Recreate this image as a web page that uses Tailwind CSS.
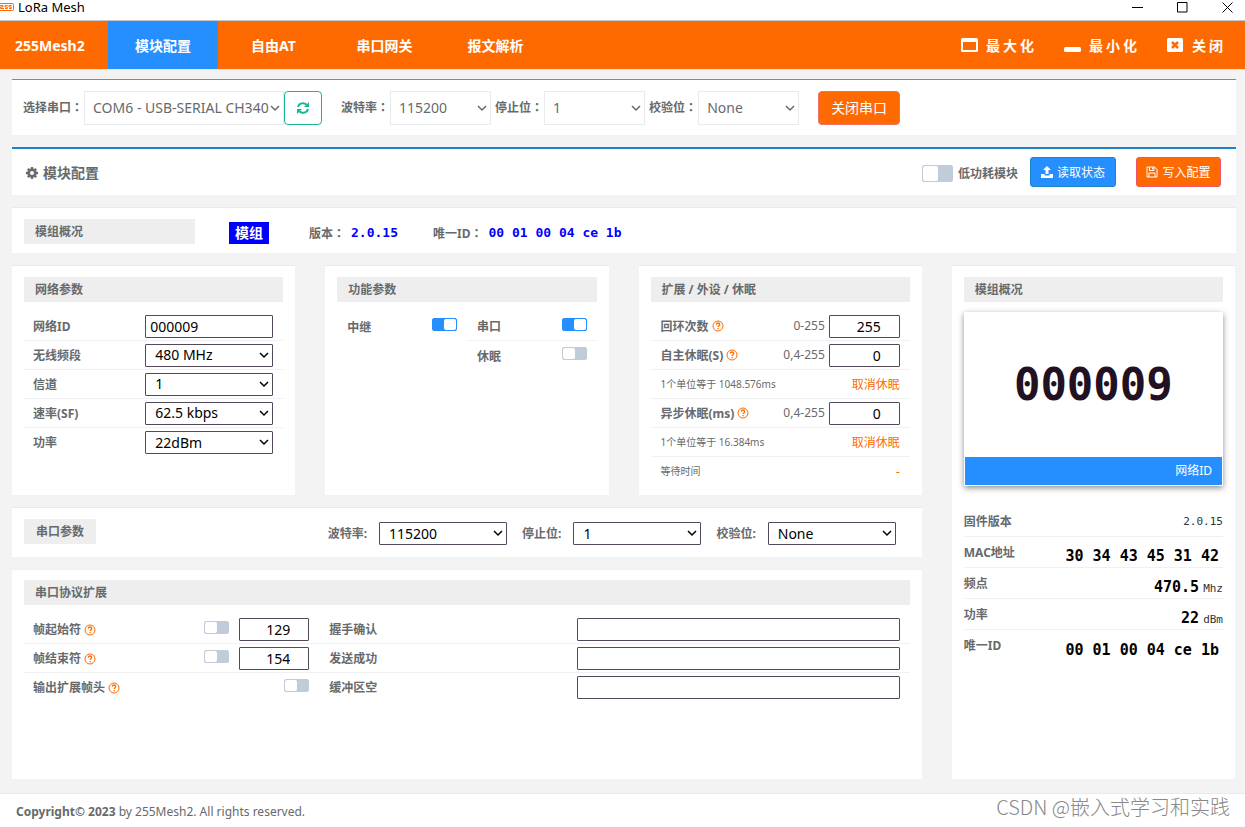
<!DOCTYPE html>
<html lang="zh-CN">
<head>
<meta charset="utf-8">
<meta name="viewport" content="width=device-width, initial-scale=1">
<title>LoRa Mesh</title>
<script src="https://cdn.jsdelivr.net/npm/@tailwindcss/browser@4"></script>
</head>
<body class="min-h-screen flex flex-col bg-[#f3f3f3] text-[#676a6c] text-xs font-['Noto_Sans','Noto_Sans_CJK_SC',sans-serif]">

<svg class="hidden" aria-hidden="true">
  <symbol id="chevron" viewBox="0 0 10 10"><path d="M1 3l4 4 4-4" fill="none" stroke="currentColor" stroke-width="1.5"/></symbol>
  <symbol id="help" viewBox="0 0 12 12"><circle cx="6" cy="6" r="5" fill="none" stroke="currentColor" stroke-width="1"/><path d="M4.3 4.6C4.4 3.5 5.1 3 6 3s1.7.6 1.7 1.5C7.7 5.600 6.100 5.700 6.100 7.100M6.100 8v1.200" fill="none" stroke="currentColor" stroke-width="1.300"/></symbol>
</svg>

<!-- window title bar -->
<header class="flex h-[21px] items-center justify-between border-b border-[#c3c8d0] bg-white pb-1.5 text-black">
  <div class="flex items-center gap-1">
    <svg class="h-2 w-[14px]" viewBox="0 0 14 8" fill="none" stroke="#ff6a00"><path d="M0 .5h12.500a1 1 0 0 1 1 1v5a1 1 0 0 1-1 1H0M0 2.500h3v1.500H.5v1.500H4M7.500 2.500H5V4h2.300v1.500H5M11.500 2.500H9V4h2.300v1.500H9"/></svg>
    <h1 class="text-[13px] leading-4">LoRa Mesh</h1>
  </div>
  <div class="flex items-center gap-[34px] pr-3">
    <button aria-label="Minimize"><svg class="size-[11px]" viewBox="0 0 11 11"><path d="M0 5.500h11" stroke="#000"/></svg></button>
    <button aria-label="Maximize"><svg class="size-[11px]" viewBox="0 0 11 11"><path d="M.5.500h9.500v9.500H.500z" fill="none" stroke="#000"/></svg></button>
    <button aria-label="Close"><svg class="size-[11px]" viewBox="0 0 11 11"><path d="M.5.500l10 10M10.500.500l-10 10" stroke="#000"/></svg></button>
  </div>
</header>

<!-- main navigation -->
<nav class="flex h-[49px] items-stretch justify-between border-b border-[#f7e3d3] bg-[#ff6a00] text-sm font-bold text-white">
  <div class="flex items-stretch">
    <a href="#" class="flex w-[108px] items-center pt-0.5 pl-[15px]">255Mesh2</a>
    <a href="#config" class="flex w-[110px] items-center justify-center bg-[#268fff] pt-0.5">模块配置</a>
    <a href="#at" class="flex w-[111px] items-center justify-center pt-0.5">自由AT</a>
    <a href="#gateway" class="flex w-[111px] items-center justify-center pt-0.5">串口网关</a>
    <a href="#parse" class="flex w-[111px] items-center justify-center pt-0.5">报文解析</a>
  </div>
  <div class="flex items-center gap-[27px] pt-0.5 pr-[19px] tracking-[3px]">
    <button class="flex items-center gap-2"><svg class="h-4 w-[17px]" viewBox="0 0 17 16"><path fill="#fff" fill-rule="evenodd" d="M1.500 0h14A1.500 1.500 0 0 1 17 1.500v11a1.500 1.500 0 0 1-1.500 1.500h-14A1.500 1.500 0 0 1 0 12.500v-11A1.500 1.500 0 0 1 1.500 0zM2 4v8h13V4z"/></svg>最大化</button>
    <button class="flex items-center gap-2"><svg class="h-4 w-[17px]" viewBox="0 0 17 16"><rect y="9" width="17" height="5" rx="1.500" fill="#fff"/></svg>最小化</button>
    <button class="flex items-center gap-2"><svg class="h-4 w-[17px]" viewBox="0 0 17 16"><rect width="16" height="14" rx="1.500" fill="#fff"/><path d="M5 4l6 6M11 4l-6 6" stroke="#ff6a00" stroke-width="2.500"/></svg>关闭</button>
  </div>
</nav>

<main class="flex flex-col gap-3 pt-[9px] pr-[9px] pb-[14px] pl-3">

  <!-- serial connection -->
  <form class="flex h-14 items-center border-t border-[#4a9bcf] bg-white px-[11px]">
    <label for="port" class="mr-px font-bold">选择串口<span lang="zh-TW" class="font-['Noto_Sans_CJK_TC']">：</span></label>
    <div class="relative text-sm">
      <select id="port" class="h-[34px] w-[200px] appearance-none border border-[#e9eaeb] bg-white pl-2"><option>COM6 - USB-SERIAL CH340</option></select>
      <svg class="pointer-events-none absolute top-3 right-1 size-[10px]"><use href="#chevron"/></svg>
    </div>
    <button type="button" aria-label="刷新" class="mr-[19px] flex h-[34px] w-[38px] items-center justify-center rounded-sm border border-[#1ab394] bg-white text-[#1ab394]">
      <svg class="size-[14px]" viewBox="0 0 14 14"><path d="M2 6a5 5 0 0 1 8.500-2.200M12 8a5 5 0 0 1-8.500 2.200" fill="none" stroke="currentColor" stroke-width="2"/><path d="M13 1v5H8zM1 13V8h5z" fill="currentColor"/></svg>
    </button>
    <label for="baud" class="mr-px font-bold">波特率<span lang="zh-TW" class="font-['Noto_Sans_CJK_TC']">：</span></label>
    <div class="relative mr-[4px] text-sm">
      <select id="baud" class="h-[34px] w-[101px] appearance-none border border-[#e9eaeb] bg-white pl-2"><option>115200</option></select>
      <svg class="pointer-events-none absolute top-3 right-1 size-[10px]"><use href="#chevron"/></svg>
    </div>
    <label for="stop" class="mr-px font-bold">停止位<span lang="zh-TW" class="font-['Noto_Sans_CJK_TC']">：</span></label>
    <div class="relative mr-[4px] text-sm">
      <select id="stop" class="h-[34px] w-[101px] appearance-none border border-[#e9eaeb] bg-white pl-2"><option>1</option></select>
      <svg class="pointer-events-none absolute top-3 right-1 size-[10px]"><use href="#chevron"/></svg>
    </div>
    <label for="parity" class="mr-px font-bold">校验位<span lang="zh-TW" class="font-['Noto_Sans_CJK_TC']">：</span></label>
    <div class="relative mr-[19px] text-sm">
      <select id="parity" class="h-[34px] w-[101px] appearance-none border border-[#e9eaeb] bg-white pl-2"><option>None</option></select>
      <svg class="pointer-events-none absolute top-3 right-1 size-[10px]"><use href="#chevron"/></svg>
    </div>
    <button type="button" class="h-[34px] w-[82px] rounded-sm border border-[#f2706a] bg-[#ff6a00] text-sm text-white">关闭串口</button>
  </form>

  <!-- page heading and actions -->
  <section class="flex h-12 items-center justify-between border-t-2 border-[#1c84c6] bg-white pr-[15px] pl-[14px]">
    <h2 class="flex items-center gap-[5px] pt-0.5 text-sm font-bold">
      <svg class="size-3" viewBox="0 0 12 12"><circle cx="6" cy="6" r="3.300" fill="none" stroke="currentColor" stroke-width="2.600"/><path d="M6 0v2M6 10v2M0 6h2M10 6h2M1.800 1.800l1.400 1.400M8.800 8.800l1.400 1.400M1.800 10.200l1.400-1.400M8.800 3.200l1.400-1.400" stroke="currentColor" stroke-width="2.400"/></svg>
      模块配置
    </h2>
    <div class="flex items-center">
      <input id="lowpower" type="checkbox" role="switch" class="mt-0.5 h-[17px] w-[31px] appearance-none rounded-xs border border-[#c0ccda] bg-[#c0ccda] before:block before:size-[15px] before:rounded-xs before:bg-white checked:border-[#268fff] checked:bg-[#268fff] checked:before:ml-auto">
      <label for="lowpower" class="mr-3 ml-[5px] pt-1 font-bold">低功耗模块</label>
      <button class="mr-5 flex h-[30px] w-[86px] items-center justify-center gap-1 rounded-[3px] border border-[#1c84c6] bg-[#268fff] text-white">
        <svg class="size-3" viewBox="0 0 12 12" fill="currentColor"><path d="M6 0l4 4H7.500v4h-3V4H2zM0 8h3.500v1.500h5V8H12v4H0z"/></svg><span class="pt-0.5">读取状态</span>
      </button>
      <button class="flex h-[30px] w-[85px] items-center justify-center gap-1 rounded-[3px] border border-[#ed5565] bg-[#ff6a00] text-white">
        <svg class="size-3" viewBox="0 0 12 12" fill="none" stroke="currentColor"><path d="M1 1h7.500L11 3.500V11H1zM3.500 1v3.500h4.500V1M3 11V7h6v4M6.500 1.500v2"/></svg><span class="pt-0.5">写入配置</span>
      </button>
    </div>
  </section>

  <!-- module summary -->
  <section class="flex h-[46px] items-center border-t border-[#e7eaec] bg-white pt-px pl-3 font-bold">
    <h3 class="mr-[34px] w-[171px] bg-[#eee] px-[11px] pt-px leading-6">模组概况</h3>
    <div class="flex items-center pt-1">
      <span class="mr-10 bg-[#0000ff] px-1.5 text-sm leading-[22px] text-white">模组</span>
      <span>版本<span lang="zh-TW" class="font-['Noto_Sans_CJK_TC']">：</span></span>
      <span class="mr-[35px] ml-1.5 font-['DejaVu_Sans_Mono',monospace] text-[13px] text-[#0000ff]">2.0.15</span>
      <span>唯一ID<span lang="zh-TW" class="font-['Noto_Sans_CJK_TC']">：</span></span>
      <span class="ml-1.5 font-['DejaVu_Sans_Mono',monospace] text-[13px] text-[#0000ff]">00 01 00 04 ce 1b</span>
    </div>
  </section>

  <div class="grid grid-cols-4 gap-x-[30px] gap-y-3 pr-px">

    <!-- network parameters -->
    <section class="min-h-[230px] border-t border-[#e7eaec] bg-white px-3 pt-[11px]">
      <h3 class="mb-[10px] bg-[#eee] px-[11px] pt-px font-bold leading-6">网络参数</h3>
      <div class="flex h-[29px] items-center justify-between border-b border-[#eef0f1] pr-[10px] pl-[9px]">
        <label for="netid" class="pt-0.5 font-bold">网络ID</label>
        <input id="netid" value="000009" class="h-[23px] w-32 rounded-[1px] border border-[#54495a] bg-white px-1 text-sm text-black">
      </div>
      <div class="flex h-[29px] items-center justify-between border-b border-[#eef0f1] pr-[10px] pl-[9px]">
        <label for="band" class="pt-0.5 font-bold">无线频段</label>
        <div class="relative text-sm text-black">
          <select id="band" class="block h-[23px] w-32 appearance-none rounded-[1px] border border-[#54495a] bg-white pl-[9px] leading-5"><option>480 MHz</option></select>
          <svg class="pointer-events-none absolute top-1.5 right-1 size-[10px]"><use href="#chevron"/></svg>
        </div>
      </div>
      <div class="flex h-[29px] items-center justify-between border-b border-[#eef0f1] pr-[10px] pl-[9px]">
        <label for="channel" class="pt-0.5 font-bold">信道</label>
        <div class="relative text-sm text-black">
          <select id="channel" class="block h-[23px] w-32 appearance-none rounded-[1px] border border-[#54495a] bg-white pl-[9px] leading-5"><option>1</option></select>
          <svg class="pointer-events-none absolute top-1.5 right-1 size-[10px]"><use href="#chevron"/></svg>
        </div>
      </div>
      <div class="flex h-[29px] items-center justify-between border-b border-[#eef0f1] pr-[10px] pl-[9px]">
        <label for="rate" class="pt-0.5 font-bold">速率(SF)</label>
        <div class="relative text-sm text-black">
          <select id="rate" class="block h-[23px] w-32 appearance-none rounded-[1px] border border-[#54495a] bg-white pl-[9px] leading-5"><option>62.5 kbps</option></select>
          <svg class="pointer-events-none absolute top-1.5 right-1 size-[10px]"><use href="#chevron"/></svg>
        </div>
      </div>
      <div class="flex h-[29px] items-center justify-between pr-[10px] pl-[9px]">
        <label for="power" class="font-bold">功率</label>
        <div class="relative text-sm text-black">
          <select id="power" class="block h-[23px] w-32 appearance-none rounded-[1px] border border-[#54495a] bg-white pl-[9px] leading-5"><option>22dBm</option></select>
          <svg class="pointer-events-none absolute top-1.5 right-1 size-[10px]"><use href="#chevron"/></svg>
        </div>
      </div>
    </section>

    <!-- feature parameters -->
    <section class="border-t border-[#e7eaec] bg-white px-3 pt-[11px]">
      <h3 class="mb-[10px] bg-[#eee] px-[11px] pt-px font-bold leading-6">功能参数</h3>
      <div class="grid grid-cols-2">
        <div class="flex h-[29px] items-center justify-between px-[10px]">
          <label for="relay" class="pt-0.5 font-bold">中继</label>
          <input id="relay" type="checkbox" role="switch" checked class="mb-1 h-[13px] w-[25px] appearance-none rounded-xs border border-[#c0ccda] bg-[#c0ccda] before:block before:h-[11px] before:w-3 before:rounded-xs before:bg-white checked:border-[#268fff] checked:bg-[#268fff] checked:before:ml-auto">
        </div>
        <div class="flex h-[29px] items-center justify-between border-b border-[#f3f4f5] px-[10px]">
          <label for="serial" class="pt-0.5 font-bold">串口</label>
          <input id="serial" type="checkbox" role="switch" checked class="mb-1 h-[13px] w-[25px] appearance-none rounded-xs border border-[#c0ccda] bg-[#c0ccda] before:block before:h-[11px] before:w-3 before:rounded-xs before:bg-white checked:border-[#268fff] checked:bg-[#268fff] checked:before:ml-auto">
        </div>
        <div class="col-start-2 flex h-[29px] items-center justify-between px-[10px]">
          <label for="sleep" class="pt-0.5 font-bold">休眠</label>
          <input id="sleep" type="checkbox" role="switch" class="mb-1 h-[13px] w-[25px] appearance-none rounded-xs border border-[#c0ccda] bg-[#c0ccda] before:block before:h-[11px] before:w-3 before:rounded-xs before:bg-white checked:border-[#268fff] checked:bg-[#268fff] checked:before:ml-auto">
        </div>
      </div>
    </section>

    <!-- extension and sleep -->
    <section class="border-t border-[#e7eaec] bg-white px-3 pt-[11px]">
      <h3 class="mb-[10px] bg-[#eee] px-[11px] pt-px font-bold leading-6">扩展 / 外设 / 休眠</h3>
      <div class="flex h-[29px] items-center border-b border-[#eef0f1] px-[10px]">
        <label for="loop" class="pt-0.5 font-bold">回环次数</label>
        <svg class="mr-auto ml-[3px] size-3 text-[#ff6a00]"><use href="#help"/></svg>
        <span>0-255</span>
        <input id="loop" value="255" class="ml-1 h-[23px] w-[71px] rounded-[1px] border border-[#54495a] bg-white pr-[18px] text-right text-sm text-black">
      </div>
      <div class="flex h-[29px] items-center border-b border-[#eef0f1] px-[10px]">
        <label for="selfsleep" class="pt-0.5 font-bold">自主休眠(S)</label>
        <svg class="mr-auto ml-[3px] size-3 text-[#ff6a00]"><use href="#help"/></svg>
        <span>0,4-255</span>
        <input id="selfsleep" value="0" class="ml-1 h-[23px] w-[71px] rounded-[1px] border border-[#54495a] bg-white pr-[18px] text-right text-sm text-black">
      </div>
      <div class="flex h-[29px] items-center justify-between border-b border-[#eef0f1] px-[10px] pt-0.5">
        <span class="text-[10px]">1个单位等于 1048.576ms</span>
        <a href="#" class="text-[#ff6a00]">取消休眠</a>
      </div>
      <div class="flex h-[29px] items-center border-b border-[#eef0f1] px-[10px]">
        <label for="asyncsleep" class="pt-0.5 font-bold">异步休眠(ms)</label>
        <svg class="mr-auto ml-[3px] size-3 text-[#ff6a00]"><use href="#help"/></svg>
        <span>0,4-255</span>
        <input id="asyncsleep" value="0" class="ml-1 h-[23px] w-[71px] rounded-[1px] border border-[#54495a] bg-white pr-[18px] text-right text-sm text-black">
      </div>
      <div class="flex h-[29px] items-center justify-between border-b border-[#eef0f1] px-[10px] pt-0.5">
        <span class="text-[10px]">1个单位等于 16.384ms</span>
        <a href="#" class="text-[#ff6a00]">取消休眠</a>
      </div>
      <div class="flex h-[29px] items-center justify-between px-[10px]">
        <span class="text-[10px]">等待时间</span>
        <span class="text-[#ff6a00]">-</span>
      </div>
    </section>

    <!-- module overview -->
    <aside class="row-span-3 border-t border-[#e7eaec] bg-white px-3 pt-[11px]">
      <h3 class="mb-[10px] bg-[#eee] px-[11px] pt-px font-bold leading-6">模组概况</h3>
      <div class="mb-5 border border-white bg-white shadow-[0_2px_6px_rgba(0,0,0,0.45)]">
        <p class="text-center font-['DejaVu_Sans_Mono',monospace] text-[44px] leading-[144px] font-bold text-[#221122]">000009</p>
        <p class="bg-[#268fff] pr-[10px] text-right leading-7 text-white">网络ID</p>
      </div>
      <dl class="font-['DejaVu_Sans_Mono',monospace] text-[11px] text-[#333]">
        <div class="flex h-[31px] items-center justify-between border-b border-[#eef0f1]">
          <dt class="pt-0.5 font-['Noto_Sans','Noto_Sans_CJK_SC',sans-serif] text-xs font-bold text-[#676a6c]">固件版本</dt><dd class="pt-0.5">2.0.15</dd>
        </div>
        <div class="flex h-[31px] items-center justify-between border-b border-[#eef0f1]">
          <dt class="pt-0.5 font-['Noto_Sans','Noto_Sans_CJK_SC',sans-serif] text-xs font-bold text-[#676a6c]">MAC地址</dt><dd class="pt-2.5 pr-1 text-[15px] font-bold text-black">30 34 43 45 31 42</dd>
        </div>
        <div class="flex h-[31px] items-center justify-between border-b border-[#eef0f1]">
          <dt class="pt-0.5 font-['Noto_Sans','Noto_Sans_CJK_SC',sans-serif] text-xs font-bold text-[#676a6c]">频点</dt><dd class="pt-2.5"><b class="mr-1 text-[15px] text-black">470.5</b>Mhz</dd>
        </div>
        <div class="flex h-[31px] items-center justify-between border-b border-[#eef0f1]">
          <dt class="pt-0.5 font-['Noto_Sans','Noto_Sans_CJK_SC',sans-serif] text-xs font-bold text-[#676a6c]">功率</dt><dd class="pt-2.5"><b class="mr-1 text-[15px] text-black">22</b>dBm</dd>
        </div>
        <div class="flex h-[31px] items-center justify-between">
          <dt class="font-['Noto_Sans','Noto_Sans_CJK_SC',sans-serif] text-xs font-bold text-[#676a6c]">唯一ID</dt><dd class="pt-2.5 pr-1 text-[15px] font-bold text-black">00 01 00 04 ce 1b</dd>
        </div>
      </dl>
    </aside>

    <!-- serial parameters -->
    <section class="col-span-3 flex h-[50px] items-center border-t border-[#e7eaec] bg-white pt-0.5 pr-[26px] pl-3 font-bold">
      <h3 class="mr-auto mb-1 bg-[#eee] px-3 pt-px leading-6">串口参数</h3>
      <label for="baud2" class="mr-3">波特率:</label>
      <div class="relative mr-[15px] text-sm font-normal text-black">
        <select id="baud2" class="block h-[23px] w-32 appearance-none rounded-[1px] border border-[#54495a] bg-white pl-[9px] leading-5"><option>115200</option></select>
        <svg class="pointer-events-none absolute top-1.5 right-1 size-[10px]"><use href="#chevron"/></svg>
      </div>
      <label for="stop2" class="mr-3">停止位:</label>
      <div class="relative mr-[15px] text-sm font-normal text-black">
        <select id="stop2" class="block h-[23px] w-32 appearance-none rounded-[1px] border border-[#54495a] bg-white pl-[9px] leading-5"><option>1</option></select>
        <svg class="pointer-events-none absolute top-1.5 right-1 size-[10px]"><use href="#chevron"/></svg>
      </div>
      <label for="parity2" class="mr-3">校验位:</label>
      <div class="relative text-sm font-normal text-black">
        <select id="parity2" class="block h-[23px] w-32 appearance-none rounded-[1px] border border-[#54495a] bg-white pl-[9px] leading-5"><option>None</option></select>
        <svg class="pointer-events-none absolute top-1.5 right-1 size-[10px]"><use href="#chevron"/></svg>
      </div>
    </section>

    <!-- serial protocol extension -->
    <section class="col-span-3 min-h-[210px] border-t border-[#eeeff0] bg-white px-3 pt-[10px]">
      <h3 class="mb-[10px] bg-[#eee] px-[11px] pt-px font-bold leading-6">串口协议扩展</h3>
      <div class="grid h-[29px] grid-cols-3 items-center border-b border-[#eef0f1]">
        <div class="flex items-center gap-[10px] pr-[10px] pl-[9px]">
          <label for="framestart" class="mr-auto flex items-center gap-[3px] pt-0.5 font-bold">帧起始符 <svg class="size-3 text-[#ff6a00]"><use href="#help"/></svg></label>
          <input type="checkbox" role="switch" aria-label="帧起始符" class="mb-1 h-[13px] w-[25px] appearance-none rounded-xs border border-[#c0ccda] bg-[#c0ccda] before:block before:h-[11px] before:w-3 before:rounded-xs before:bg-white checked:border-[#268fff] checked:bg-[#268fff] checked:before:ml-auto">
          <input id="framestart" value="129" class="h-[23px] w-[70px] rounded-[1px] border border-[#54495a] bg-white pr-[18px] text-right text-sm text-black">
        </div>
        <div class="col-span-2 flex items-center justify-between px-[10px]">
          <label for="handshake" class="pt-0.5 font-bold">握手确认</label>
          <input id="handshake" class="h-[23px] w-[323px] rounded-[1px] border border-[#54495a] bg-white px-1 text-sm text-black">
        </div>
      </div>
      <div class="grid h-[29px] grid-cols-3 items-center border-b border-[#eef0f1]">
        <div class="flex items-center gap-[10px] pr-[10px] pl-[9px]">
          <label for="frameend" class="mr-auto flex items-center gap-[3px] pt-0.5 font-bold">帧结束符 <svg class="size-3 text-[#ff6a00]"><use href="#help"/></svg></label>
          <input type="checkbox" role="switch" aria-label="帧结束符" class="mb-1 h-[13px] w-[25px] appearance-none rounded-xs border border-[#c0ccda] bg-[#c0ccda] before:block before:h-[11px] before:w-3 before:rounded-xs before:bg-white checked:border-[#268fff] checked:bg-[#268fff] checked:before:ml-auto">
          <input id="frameend" value="154" class="h-[23px] w-[70px] rounded-[1px] border border-[#54495a] bg-white pr-[18px] text-right text-sm text-black">
        </div>
        <div class="col-span-2 flex items-center justify-between px-[10px]">
          <label for="sent" class="pt-0.5 font-bold">发送成功</label>
          <input id="sent" class="h-[23px] w-[323px] rounded-[1px] border border-[#54495a] bg-white px-1 text-sm text-black">
        </div>
      </div>
      <div class="grid h-[29px] grid-cols-3 items-center">
        <div class="flex items-center gap-[10px] pr-[10px] pl-[9px]">
          <label for="exthead" class="mr-auto flex items-center gap-[3px] font-bold">输出扩展帧头 <svg class="size-3 text-[#ff6a00]"><use href="#help"/></svg></label>
          <input id="exthead" type="checkbox" role="switch" class="mb-1 h-[13px] w-[25px] appearance-none rounded-xs border border-[#c0ccda] bg-[#c0ccda] before:block before:h-[11px] before:w-3 before:rounded-xs before:bg-white checked:border-[#268fff] checked:bg-[#268fff] checked:before:ml-auto">
        </div>
        <div class="col-span-2 flex items-center justify-between px-[10px]">
          <label for="buffer" class="font-bold">缓冲区空</label>
          <input id="buffer" class="h-[23px] w-[323px] rounded-[1px] border border-[#54495a] bg-white px-1 text-sm text-black">
        </div>
      </div>
    </section>
  </div>
</main>

<footer class="flex flex-1 items-center justify-between border-t border-[#e7eaec] bg-white pr-[15px] pl-4">
  <p class="pt-0.5"><strong>Copyright© 2023</strong> by 255Mesh2. All rights reserved.</p>
  <p class="pb-2 font-['Noto_Sans_CJK_SC',sans-serif] text-xl leading-6 font-light text-[#888]">CSDN @嵌入式学习和实践</p>
</footer>
</body>
</html>
